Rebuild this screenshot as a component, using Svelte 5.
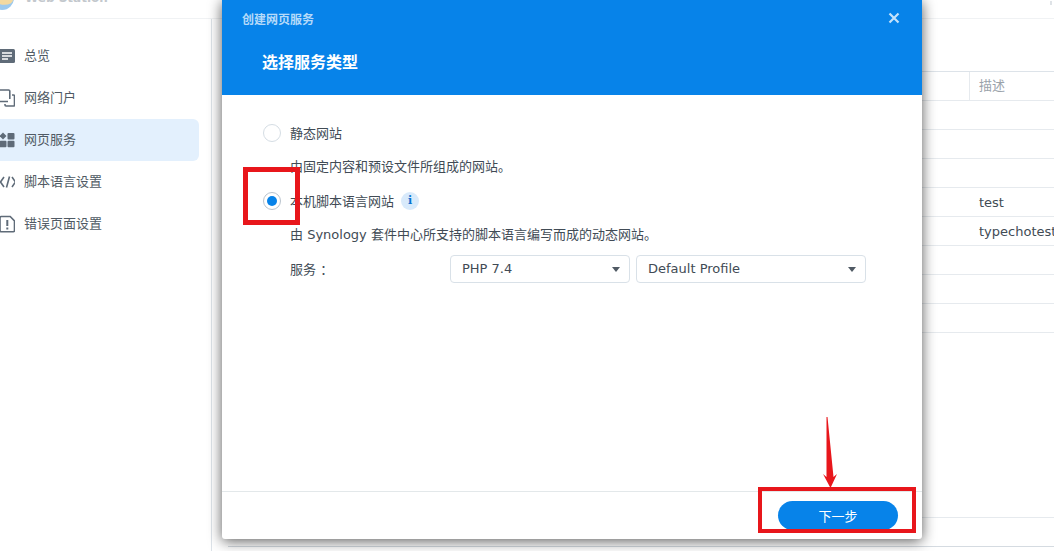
<script lang="ts">
  const navItems = [
    { id: 'overview', label: '总览' },
    { id: 'portal', label: '网络门户' },
    { id: 'service', label: '网页服务' },
    { id: 'script', label: '脚本语言设置' },
    { id: 'error', label: '错误页面设置' }
  ];
  const rows = ['', '', '', 'test', 'typechotest', '', '', ''];
</script>

<div class="page">
  <header class="topbar">
    <svg class="logo" width="19" height="18" viewBox="0 0 19 18">
      <circle cx="2" cy="-2" r="12" fill="#9cc9ee" />
      <path d="M-4 -4h17v4a7 4 0 0 1-17 0z" fill="#f3d9a0" />
    </svg>
    <span class="app-title">Web Station</span>
    <span class="dots"></span>
  </header>

  <div class="body">
    <nav class="sidebar">
      {#each navItems as item}
        <div class="nav-item" class:active={item.id === 'service'}>
          <svg class="nav-icon" width="18" height="18" viewBox="0 0 18 18">
            {#if item.id === 'overview'}
              <rect x="2" y="2" width="16" height="14" rx="1.5" fill="#5f6b78" />
              <path d="M5 6h10M5 9h10M5 12h6" stroke="#fff" stroke-width="1.4" />
            {:else if item.id === 'portal'}
              <path d="M11 12.500H2.500A1.200 1.200 0 0 1 1.500 11V2A1.200 1.200 0 0 1 2.500 1H11.500A1.200 1.200 0 0 1 12.800 2V10" fill="none" stroke="#5f6b78" stroke-width="1.600" />
              <path d="M15 6h1.500a1 1 0 0 1 1 1V16a1 1 0 0 1-1 1H9a1 1 0 0 1-1-1V15" fill="none" stroke="#5f6b78" stroke-width="1.600" />
            {:else if item.id === 'service'}
              <path d="M6 1.500l3.500 3.500-3.500 3.500L2.500 5z" fill="#5f6b78" />
              <rect x="10.500" y="2" width="7" height="6.500" rx="1" fill="#5f6b78" />
              <rect x="2.500" y="9.800" width="7" height="6.500" rx="1" fill="#5f6b78" />
              <rect x="10.500" y="9.800" width="7" height="6.500" rx="1" fill="#5f6b78" />
            {:else if item.id === 'script'}
              <path d="M7 4L3.500 9L7 14M15 4L18.500 9L15 14M12.500 3.500L9.500 14.500" fill="none" stroke="#5f6b78" stroke-width="1.600" />
            {:else}
              <path d="M4.200 1.500h9l4.300 4.500v9.500a1.200 1.200 0 0 1-1.200 1.200H4.200a1.200 1.200 0 0 1-1.200-1.200V2.700A1.200 1.200 0 0 1 4.200 1.500z" fill="none" stroke="#5f6b78" stroke-width="1.600" />
              <path d="M10.300 5v6M10.300 12.500v2" stroke="#5f6b78" stroke-width="2" />
            {/if}
          </svg>
          <span class="nav-label">{item.label}</span>
        </div>
      {/each}
    </nav>

    <main class="content">
      <div class="table">
        <div class="table-head"><div class="head-cell">描述</div></div>
        {#each rows as row}
          <div class="table-row">{row}</div>
        {/each}
      </div>
      <div class="pager"></div>
    </main>
  </div>

  <section class="modal">
    <div class="modal-head">
      <div class="modal-bar">
        <span class="modal-caption">创建网页服务</span>
        <svg class="close" width="12" height="12" viewBox="0 0 12 12">
          <path d="M1.500 1.500l9 9M10.500 1.500l-9 9" stroke="#c4e2fb" stroke-width="2.200" />
        </svg>
      </div>
      <h2>选择服务类型</h2>
    </div>

    <div class="modal-body">
      <div class="option">
        <span class="radio"></span>
        <span class="label">静态网站</span>
      </div>
      <p class="hint first">由固定内容和预设文件所组成的网站。</p>
      <div class="option second">
        <span class="radio checked"></span>
        <span class="label">本机脚本语言网站</span>
        <span class="info">i</span>
      </div>
      <p class="hint second-hint">由 Synology 套件中心所支持的脚本语言编写而成的动态网站。</p>
      <div class="service-row">
        <span class="service-label">服务 ：</span>
        <div class="select php">PHP 7.4<span class="caret"></span></div>
        <div class="select profile">Default Profile<span class="caret"></span></div>
      </div>
    </div>

    <div class="modal-foot">
      <button type="button" class="next">下一步</button>
    </div>
  </section>

  <div class="mark mark-radio"></div>
  <div class="mark mark-next"></div>
  <svg class="arrow" width="20" height="76" viewBox="0 0 20 76">
    <path d="M6.500 1L7.500 1L13.500 61L17 58L10.500 72L3 58L6.500 61z" fill="#e8161b" />
  </svg>
</div>

<style>
  :global(body) {
    margin: 0;
    background: #fff;
  }

  .page {
    position: relative;
    width: 1054px;
    height: 551px;
    overflow: hidden;
    display: flex;
    flex-direction: column;
    font-family: "DejaVu Sans", "Noto Sans CJK SC", sans-serif;
    font-size: 13px;
    color: #414b55;
    background: #fff;
  }

  .topbar {
    height: 18px;
    flex: none;
    display: flex;
    align-items: flex-start;
    border-bottom: 1px solid #f0f2f4;
    overflow: hidden;
  }

  .logo {
    flex: none;
  }

  .app-title {
    margin: -10px 0 0 6px;
    font-weight: 700;
    font-size: 12px;
    line-height: 16px;
    color: #c3c8cd;
  }

  .dots {
    margin: 1px 2px 0 auto;
    width: 2px;
    height: 4px;
    background: #dfe3e7;
  }

  .body {
    flex: 1;
    display: flex;
    min-height: 0;
  }

  .sidebar {
    width: 212px;
    flex: none;
    box-sizing: border-box;
    border-right: 1px solid #dde3e9;
    padding: 16px 12px 0 0;
  }

  .nav-item {
    height: 42px;
    display: flex;
    align-items: center;
    gap: 9px;
    margin-left: -3px;
    border-radius: 0 6px 6px 0;
    color: #505a64;
    line-height: 1;
  }

  .nav-item.active {
    background: #e3f0fd;
  }

  .nav-icon {
    flex: none;
  }

  .nav-label {
    padding-bottom: 2px;
  }

  .content {
    flex: 1;
    padding: 52px 0 0 16px;
    display: flex;
    flex-direction: column;
    min-width: 0;
  }

  .table {
    flex: none;
    border-top: 1px solid #dde3e9;
  }

  .table-head {
    height: 28px;
    display: flex;
    justify-content: flex-end;
    border-bottom: 1px solid #e6eaee;
  }

  .head-cell {
    box-sizing: border-box;
    width: 85px;
    border-left: 1px solid #e6eaee;
    padding-left: 9px;
    line-height: 28px;
    color: #9aa2aa;
  }

  .table-row {
    height: 28px;
    border-bottom: 1px solid #e6eaee;
    line-height: 30px;
    padding-left: 751px;
    white-space: nowrap;
  }

  .pager {
    margin-top: 184px;
    height: 28px;
    border-top: 1px solid #e6eaee;
    border-bottom: 1px solid #d5dbe1;
  }

  .modal {
    position: absolute;
    left: 222px;
    top: 0;
    width: 700px;
    height: 539px;
    background: #fff;
    display: flex;
    flex-direction: column;
    border-radius: 0 0 3px 3px;
    box-shadow: 0 2px 14px rgba(0, 0, 0, 0.65);
  }

  .modal-head {
    height: 95px;
    flex: none;
    background: #0783e9;
    color: #fff;
  }

  .modal-bar {
    height: 36px;
    display: flex;
    align-items: center;
    justify-content: space-between;
    padding: 0 22px 0 20px;
  }

  .modal-caption {
    font-size: 12px;
    font-weight: 700;
    color: #b5daf9;
  }

  h2 {
    margin: 8px 0 0 40px;
    font-size: 16px;
    font-weight: 700;
    line-height: 38px;
  }

  .modal-body {
    flex: 1;
    padding: 26px 40px 0 41px;
  }

  .option {
    display: flex;
    align-items: center;
    height: 24px;
    gap: 9px;
  }

  .option.second {
    margin-top: 10px;
  }

  .label {
    padding-bottom: 2px;
  }

  .radio {
    box-sizing: border-box;
    width: 18px;
    height: 18px;
    border-radius: 50%;
    border: 1px solid #d5dde4;
    background: #fff;
    flex: none;
    display: flex;
    align-items: center;
    justify-content: center;
  }

  .radio.checked {
    border-color: #b9c3cd;
  }

  .radio.checked::after {
    content: "";
    width: 10px;
    height: 10px;
    border-radius: 50%;
    background: #0783e9;
  }

  .info {
    width: 18px;
    height: 18px;
    margin-left: -2px;
    border-radius: 50%;
    background: #d8eafb;
    color: #0773cf;
    font-family: "DejaVu Serif", serif;
    font-size: 11px;
    font-weight: 700;
    text-align: center;
    line-height: 18px;
  }

  .hint {
    margin: 0;
    padding-left: 27px;
    line-height: 24px;
  }

  .hint.first {
    margin-top: 10px;
  }

  .hint.second-hint {
    margin-top: 10px;
  }

  .service-row {
    display: flex;
    align-items: center;
    margin-top: 8px;
    padding-left: 27px;
  }

  .service-label {
    width: 160px;
    flex: none;
    margin-bottom: 2px;
  }

  .select {
    box-sizing: border-box;
    height: 28px;
    border: 1px solid #d9e1e8;
    border-radius: 4px;
    padding: 0 11px;
    line-height: 26px;
    display: flex;
    justify-content: space-between;
    align-items: center;
  }

  .select.php {
    width: 180px;
    margin-right: 6px;
  }

  .select.profile {
    width: 230px;
  }

  .caret {
    width: 0;
    height: 0;
    border-left: 4px solid transparent;
    border-right: 4px solid transparent;
    border-top: 5px solid #505a64;
    margin-right: -2px;
  }

  .modal-foot {
    box-sizing: border-box;
    height: 48px;
    flex: none;
    border-top: 1px solid #e3e8ea;
    display: flex;
    justify-content: flex-end;
    align-items: flex-start;
    padding: 9px 24px 0 0;
  }

  .next {
    width: 120px;
    height: 29px;
    border: none;
    border-radius: 15px;
    background: #0783e9;
    color: #fff;
    font-family: inherit;
    font-size: 13px;
    padding: 0;
  }

  .mark {
    position: absolute;
    box-sizing: border-box;
    border-style: solid;
    border-color: #e8161b;
  }

  .mark-radio {
    left: 243px;
    top: 167px;
    width: 57px;
    height: 58px;
    border-width: 5px;
  }

  .mark-next {
    left: 758px;
    top: 487px;
    width: 158px;
    height: 46px;
    border-width: 4px;
  }

  .arrow {
    position: absolute;
    left: 820px;
    top: 416px;
  }
</style>
